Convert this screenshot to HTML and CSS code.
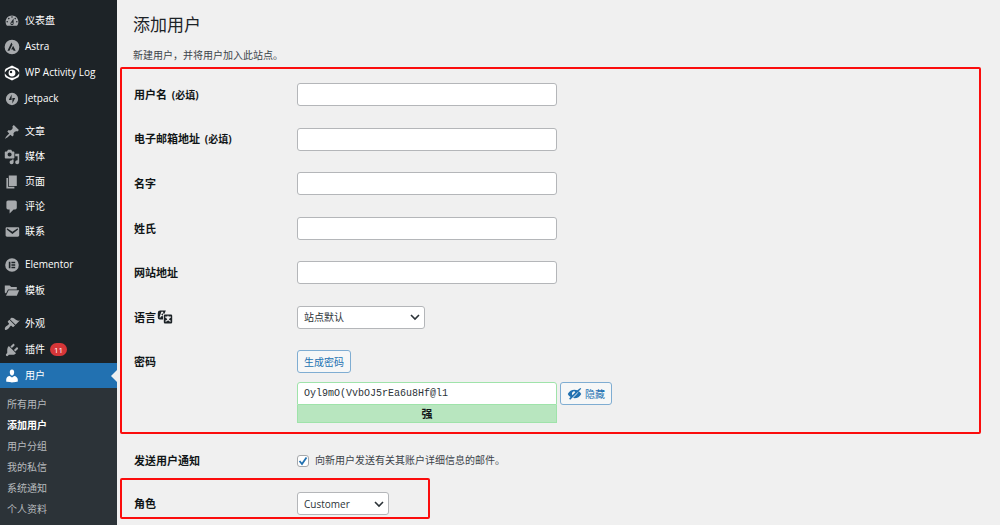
FILE: index.html
```html
<!DOCTYPE html>
<html lang="zh-CN">
<head>
    <meta charset="UTF-8">
    <meta name="viewport" content="width=device-width, initial-scale=1.0">
    <title>添加用户</title>
    <link rel="stylesheet" href="styles.css">
</head>
<body>
    <div class="wrapper">
        <nav class="sidebar">
            <ul class="menu-group">
                <li><a href="#" class="menu-item">
                    <svg class="icon" viewBox="0 0 20 20"><path d="M3.76 16h12.48c1.1-1.37 1.76-3.11 1.76-5 0-4.42-3.58-8-8-8s-8 3.58-8 8c0 1.89.66 3.63 1.76 5zM10 4c.55 0 1 .45 1 1s-.45 1-1 1-1-.45-1-1 .45-1 1-1zM6 6c.55 0 1 .45 1 1s-.45 1-1 1-1-.45-1-1 .45-1 1-1zm8 0c.55 0 1 .45 1 1s-.45 1-1 1-1-.45-1-1 .45-1 1-1zm-5.37 5.55L12 7v6c0 1.1-.9 2-2 2s-2-.9-2-2c0-.57.24-1.08.63-1.45zM4 10c.55 0 1 .45 1 1s-.45 1-1 1-1-.45-1-1 .45-1 1-1zm12 0c.55 0 1 .45 1 1s-.45 1-1 1-1-.45-1-1 .45-1 1-1zm-5 3c0-.55-.45-1-1-1s-1 .45-1 1 .45 1 1 1 1-.45 1-1z"/></svg>
                    仪表盘
                </a></li>
                <li><a href="#" class="menu-item">
                    <svg class="icon" viewBox="0 0 20 20"><path fill-rule="evenodd" d="M10 .8a9.2 9.2 0 1 0 0 18.400a9.200 9.200 0 1 0 0-18.400zM9.300 4.500L4.300 14.600h2.500L10.600 7zM11.400 8.300L9 13h2.300l.7 1.600h2.600z"/></svg>
                    Astra
                </a></li>
                <li><a href="#" class="menu-item">
                    <svg class="icon icon-white" viewBox="0 0 20 20"><path fill-rule="evenodd" d="M10 .6l8 4.200 1 2.200v6l-1 2.200-8 4.200-8-4.200L1 13V7l1-2.200zM10 4C6.200 4 2.800 6.300.8 10c2 3.700 5.400 6 9.200 6s7.200-2.300 9.200-6C17.200 6.300 13.800 4 10 4z"/><path fill-rule="evenodd" d="M10 5.700a4.300 4.300 0 1 1 0 8.600a4.300 4.300 0 1 1 0-8.600zM8.800 7.300a1.500 1.500 0 1 0 0 3a1.500 1.500 0 1 0 0-3z"/></svg>
                    WP Activity Log
                </a></li>
                <li><a href="#" class="menu-item">
                    <svg class="icon" viewBox="0 0 20 20"><path fill-rule="evenodd" d="M10 2.300a7.700 7.700 0 1 0 0 15.400a7.700 7.700 0 1 0 0-15.400zM9.500 4.500v6.700H6zM10.500 15.500V8.800H14z"/></svg>
                    Jetpack
                </a></li>
            </ul>

            <ul class="menu-group menu-content">
                <li><a href="#" class="menu-item">
                    <svg class="icon" viewBox="0 0 20 20"><path d="M10.44 3.02l1.82-1.82 6.36 6.35-1.83 1.82c-1.05-.68-2.48-.57-3.41.36l-.75.75c-.92.93-1.04 2.35-.35 3.41l-1.83 1.82-2.41-2.41-2.8 2.79c-.42.42-3.38 2.71-3.8 2.29s1.86-3.39 2.28-3.81l2.79-2.79L4.1 9.36l1.83-1.82c1.05.69 2.48.57 3.4-.36l.75-.75c.93-.92 1.05-2.35.36-3.41z"/></svg>
                    文章
                </a></li>
                <li><a href="#" class="menu-item">
                    <svg class="icon" viewBox="0 0 20 20"><path d="M13 11V4c0-.55-.45-1-1-1h-1.67L9 1H5L3.67 3H2c-.55 0-1 .45-1 1v7c0 .55.45 1 1 1h10c.55 0 1-.45 1-1zM7 4.500c1.380 0 2.500 1.120 2.500 2.500S8.380 9.500 7 9.500 4.500 8.380 4.500 7 5.620 4.500 7 4.500zM14 6h5v10.500c0 1.380-1.120 2.500-2.500 2.500S14 17.880 14 16.500s1.120-2.500 2.500-2.500c.17 0 .34.02.5.05V9h-3V6zm-4 8.050V13h2v3.500c0 1.380-1.120 2.500-2.500 2.500S7 17.880 7 16.500 8.120 14 9.500 14c.17 0 .34.02.5.05z"/></svg>
                    媒体
                </a></li>
                <li><a href="#" class="menu-item">
                    <svg class="icon" viewBox="0 0 20 20"><path d="M6 15V2h10v13H6zm-1 1h8v2H3V5h2v11z"/></svg>
                    页面
                </a></li>
                <li><a href="#" class="menu-item">
                    <svg class="icon" viewBox="0 0 20 20"><path d="M5 2h9c1.100 0 2 .9 2 2v7c0 1.100-.9 2-2 2h-2l-5 5v-5H5c-1.100 0-2-.9-2-2V4c0-1.100.9-2 2-2z"/></svg>
                    评论
                </a></li>
                <li><a href="#" class="menu-item">
                    <svg class="icon" viewBox="0 0 20 20"><path d="M3.870 4h13.250C18.370 4 19 4.590 19 5.790v8.420c0 1.190-.63 1.790-1.880 1.790H3.870c-1.250 0-1.880-.6-1.880-1.790V5.790c0-1.200.63-1.790 1.880-1.790zm6.620 8.600l6.740-5.530c.24-.2.43-.66.13-1.070-.29-.41-.82-.42-1.170-.17l-5.700 3.860L4.800 5.830c-.35-.25-.88-.24-1.170.17-.3.41-.11.87.13 1.070z"/></svg>
                    联系
                </a></li>
            </ul>

            <ul class="menu-group">
                <li><a href="#" class="menu-item">
                    <svg class="icon" viewBox="0 0 20 20"><path fill-rule="evenodd" d="M10 1.500a8.500 8.500 0 1 0 0 17a8.500 8.500 0 1 0 0-17zM6 6h2v8H6zM9.300 6H14v1.800H9.300zM9.300 9.100H14v1.800H9.300zM9.300 12.200H14V14H9.300z"/></svg>
                    Elementor
                </a></li>
                <li><a href="#" class="menu-item">
                    <svg class="icon" viewBox="0 0 20 20"><path d="M1 3h6l2 2h7v3H5L2.500 13 1 12zM5.800 9H19l-3 7H2.500z"/></svg>
                    模板
                </a></li>
            </ul>

            <ul class="menu-group">
                <li><a href="#" class="menu-item">
                    <svg class="icon" viewBox="0 0 20 20"><path d="M14.480 11.060L7.410 3.990l1.500-1.500c.5-.56 2.300-.47 3.510.32 1.210.8 1.430 1.280 2.910 2.100 1.180.64 2.450 1.260 4.450.85zm-.71.71L6.700 4.700 4.930 6.470c-.39.39-.39 1.020 0 1.410l1.060 1.060c.39.39.39 1.030 0 1.420-.6.6-1.430 1.110-2.210 1.690-.35.26-.7.53-1.010.84C1.430 14.230.4 16.080 1.400 17.070c.99 1 2.840-.03 4.180-1.360.31-.31.58-.66.85-1.020.57-.78 1.080-1.610 1.690-2.210.39-.39 1.020-.39 1.410 0l1.060 1.060c.39.39 1.020.39 1.410 0z"/></svg>
                    外观
                </a></li>
                <li><a href="#" class="menu-item">
                    <svg class="icon" viewBox="0 0 20 20"><path d="M13.110 4.360L9.870 7.600 8 5.730l3.240-3.240c.35-.34 1.050-.2 1.560.32.52.51.66 1.210.31 1.550zm-8 1.770l.91-1.120 9.010 9.010-1.190.84c-.71.71-2.630 1.160-3.820 1.160H6.140L4.900 17.260c-.59.59-1.540.59-2.120 0-.59-.58-.59-1.530 0-2.120l1.240-1.240v-3.880c0-1.130.4-3.190 1.090-3.890zm7.260 3.970l3.240-3.240c.34-.35 1.040-.21 1.550.31.52.51.66 1.210.31 1.550l-3.240 3.250z"/></svg>
                    插件 <span class="badge">11</span>
                </a></li>
                <li><a href="#" class="menu-item current">
                    <svg class="icon icon-white" viewBox="0 0 20 20"><path d="M10 9.250c-2.270 0-2.730-3.440-2.730-3.440C7 4.020 7.820 2 9.970 2c2.160 0 2.980 2.020 2.710 3.810 0 0-.41 3.440-2.680 3.440zm0 2.570L12.720 10c2.390 0 4.520 2.330 4.520 4.530v2.490s-3.650 1.130-7.240 1.130c-3.650 0-7.240-1.130-7.240-1.130v-2.490c0-2.250 1.940-4.480 4.470-4.480z"/></svg>
                    用户
                </a></li>
            </ul>

            <ul class="submenu">
                <li><a href="#">所有用户</a></li>
                <li><a href="#" class="active">添加用户</a></li>
                <li><a href="#">用户分组</a></li>
                <li><a href="#">我的私信</a></li>
                <li><a href="#">系统通知</a></li>
                <li><a href="#">个人资料</a></li>
            </ul>
        </nav>

        <main class="content">
            <h1>添加用户</h1>
            <p class="intro">新建用户，并将用户加入此站点。</p>

            <form>
                <div class="details highlight">
                    <div class="form-row">
                        <label for="username">用户名 <span class="required">(必填)</span></label>
                        <input type="text" id="username" class="text-input">
                    </div>
                    <div class="form-row">
                        <label for="email">电子邮箱地址 <span class="required">(必填)</span></label>
                        <input type="email" id="email" class="text-input">
                    </div>
                    <div class="form-row">
                        <label for="firstName">名字</label>
                        <input type="text" id="firstName" class="text-input">
                    </div>
                    <div class="form-row">
                        <label for="lastName">姓氏</label>
                        <input type="text" id="lastName" class="text-input">
                    </div>
                    <div class="form-row">
                        <label for="url">网站地址</label>
                        <input type="url" id="url" class="text-input">
                    </div>
                    <div class="form-row">
                        <label for="locale" class="locale-label">语言
                            <svg class="icon-translate" viewBox="0 0 20 20"><path fill-rule="evenodd" d="M4 2h7L9.500 5.500 7.500 7v6H3.500A2.500 2.500 0 0 1 1 10.500V5a3 3 0 0 1 3-3zM3 10.500h1.500L5 9h2V7.500H5.500L6.500 5l.8 1.500h1L7.500 3.500h-2z"/><path fill-rule="evenodd" d="M10 7h7.500A1.500 1.500 0 0 1 19 8.500v8a1.500 1.500 0 0 1-1.500 1.500H10a1.500 1.500 0 0 1-1.500-1.500v-8A1.500 1.500 0 0 1 10 7zM13 8.300v1.200h-2.700v1.300h1.200c.3.900.8 1.700 1.400 2.300-.8.700-1.700 1.200-2.700 1.600l.6 1.300c1.100-.4 2.200-1.100 3.100-1.900.8.800 1.800 1.500 2.900 1.900l.6-1.300c-1-.3-1.800-.9-2.600-1.600.6-.7 1.100-1.500 1.400-2.300h1.200V9.500h-3V8.300z"/></svg>
                        </label>
                        <select id="locale" class="select-locale">
                            <option>站点默认</option>
                        </select>
                    </div>
                    <div class="form-row password-row">
                        <label for="password">密码</label>
                        <div class="password-area">
                            <button type="button" class="button">生成密码</button>
                            <div class="password-line">
                                <div class="password-box">
                                    <input type="text" id="password" class="text-input password-input" value="Oyl9mO(VvbOJ5rEa6u8Hf@l1" spellcheck="false">
                                    <div class="strength">强</div>
                                </div>
                                <button type="button" class="button">
                                    <svg class="icon-hidden" viewBox="0 0 20 20"><path fill-rule="evenodd" d="M17.800 2.500l1.200 1.200L4.300 18.300l-1.500-1.200 1.900-2.400C3 13.700 1.800 12.300 1 10.600c1.900-3.700 5.200-5.700 9-5.700 1.400 0 2.700.3 3.800.8zM10 7a3.300 3.300 0 0 0-2.800 5.200l3.800-3.900zM15.800 6.900c1.400.9 2.500 2.200 3.200 3.700-1.800 3.700-5.200 5.700-9 5.700-.7 0-1.400-.1-2-.2l5.300-5.300z"/></svg>
                                    隐藏
                                </button>
                            </div>
                        </div>
                    </div>
                </div>

                <div class="form-row notify">
                    <span class="row-title">发送用户通知</span>
                    <label for="notify" class="check-label">
                        <input type="checkbox" id="notify" checked>
                        向新用户发送有关其账户详细信息的邮件。
                    </label>
                </div>

                <div class="role highlight">
                    <div class="form-row">
                        <label for="role">角色</label>
                        <select id="role" class="select-role">
                            <option>Customer</option>
                        </select>
                    </div>
                </div>
            </form>
        </main>
    </div>
</body>
</html>
```
FILE: styles.css
```css
* {
    margin: 0;
    padding: 0;
    box-sizing: border-box;
}

body {
    background-color: #f0f0f0;
    color: #3c434a;
    font-family: "Open Sans", "Noto Sans CJK SC", sans-serif;
    font-size: 10px;
    line-height: 15px;
}

input, select, button {
    font-family: inherit;
    font-size: inherit;
}

ul {
    list-style: none;
}

a {
    text-decoration: none;
}

.wrapper {
    display: flex;
    min-height: 100vh;
}

/* sidebar */
.sidebar {
    display: flex;
    flex-direction: column;
    flex: 0 0 117px;
    padding-top: 8px;
    background-color: #1d2327;
}

.menu-group {
    display: flex;
    flex-direction: column;
    gap: 1px;
}

.menu-group + .menu-group {
    margin-top: 8px;
}

.menu-content {
    gap: 0;
}

.menu-item {
    display: flex;
    align-items: center;
    gap: 5px;
    height: 25px;
    padding-left: 4px;
    color: #fff;
}

.icon {
    width: 16px;
    height: 16px;
    fill: #a7aaad;
}

.icon-white {
    fill: #fff;
}

.current {
    position: relative;
    background-color: #2271b1;
}

.current::after {
    content: "";
    position: absolute;
    top: 7px;
    right: 0;
    border: 6px solid transparent;
    border-left: 0;
    border-right-color: #f0f0f0;
}

.badge {
    padding: 0 4px;
    border-radius: 7px;
    background-color: #d63638;
    color: #fff;
    font-size: 8px;
    line-height: 13px;
}

.submenu {
    flex: 1;
    padding: 6px 0 5px 7px;
    background-color: #2c3338;
}

.submenu a {
    display: block;
    color: #b7bbbe;
    line-height: 21px;
}

.submenu .active {
    color: #fff;
    font-weight: bold;
}

/* content */
.content {
    flex: 1;
    padding: 12px 19px 6px 3px;
}

h1 {
    padding-left: 13px;
    color: #1d2327;
    font-size: 17px;
    font-weight: normal;
    line-height: 26px;
}

.intro {
    margin: 10px 0 4px;
    padding-left: 13px;
}

.highlight {
    border: 2px solid #fb0d0d;
    border-radius: 2px;
}

.details {
    display: flex;
    flex-direction: column;
    justify-content: space-between;
    min-height: 367px;
    padding: 14px 12px 9px;
}

.form-row {
    display: grid;
    grid-template-columns: 163px 1fr;
    align-items: center;
    justify-items: start;
    color: #1d2327;
}

.form-row > label:first-child, .row-title {
    color: #101517;
    font-size: 11px;
    font-weight: bold;
}

.required {
    margin-left: 2px;
    font-size: 10px;
}

.text-input, select {
    height: 23px;
    padding: 0 6px;
    border: 1px solid #b4b6b9;
    border-radius: 3px;
    background-color: #fff;
    color: #2c3338;
}

.text-input {
    width: 100%;
    max-width: 260px;
}

select {
    appearance: none;
    background-image: url("data:image/svg+xml,%3Csvg xmlns='http://www.w3.org/2000/svg' viewBox='0 0 10 10'%3E%3Cpath d='M1 3l4 4 4-4' fill='none' stroke='%232c3338' stroke-width='1.6'/%3E%3C/svg%3E");
    background-repeat: no-repeat;
    background-position: right 4px center;
    background-size: 10px;
}

.select-locale {
    width: 128px;
}

.select-role {
    width: 92px;
}

.locale-label {
    display: flex;
    align-items: center;
    gap: 1px;
}

.icon-translate {
    width: 16px;
    height: 16px;
    fill: #1d2327;
}

.password-row {
    align-items: start;
    line-height: 23px;
}

.password-area {
    display: grid;
    gap: 9px;
    justify-items: start;
    width: 100%;
}

.password-line {
    display: flex;
    align-items: flex-start;
    gap: 3px;
    width: 100%;
}

.password-box {
    flex: 0 1 260px;
}

.password-input {
    display: block;
    border-color: #9fe3aa;
    border-radius: 3px 3px 0 0;
    font-family: "Liberation Mono", monospace;
}

.strength {
    border: 1px solid #9fe3aa;
    border-top: 0;
    background-color: #b8e6bf;
    color: #101517;
    font-size: 11px;
    font-weight: bold;
    line-height: 17px;
    text-align: center;
}

.button {
    display: flex;
    align-items: center;
    gap: 3px;
    height: 23px;
    padding: 0 6px;
    border: 1px solid #7fadd2;
    border-radius: 3px;
    background-color: #f6f7f7;
    color: #2271b1;
    cursor: pointer;
}

.icon-hidden {
    width: 15px;
    height: 15px;
    fill: #2271b1;
}

.notify {
    padding: 19px 14px 10px;
}

.check-label {
    display: flex;
    align-items: center;
    gap: 6px;
    color: #3c434a;
}

input[type="checkbox"] {
    appearance: none;
    width: 12px;
    height: 12px;
    border: 1px solid #a5a8ab;
    border-radius: 3px;
    background: #fff url("data:image/svg+xml,%3Csvg xmlns='http://www.w3.org/2000/svg' viewBox='0 0 10 10'%3E%3Cpath d='M1.500 5l2.500 3 4.500-6.500' fill='none' stroke='%232271b1' stroke-width='1.800'/%3E%3C/svg%3E") center / 10px no-repeat;
}

.role {
    width: fit-content;
    padding: 12px 39px 2px 12px;
}
```
